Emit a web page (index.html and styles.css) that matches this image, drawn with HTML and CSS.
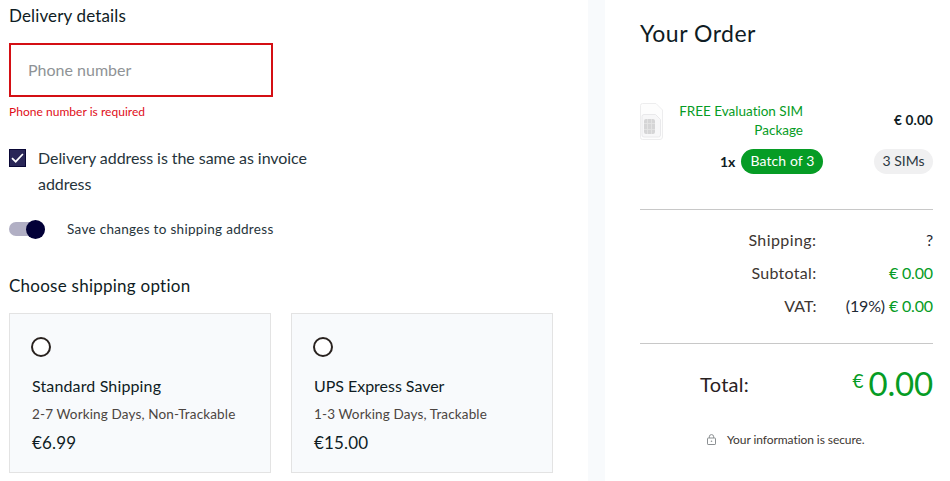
FILE: index.html
```html
<!DOCTYPE html>
<html lang="en">
<head>
<meta charset="utf-8">
<title>Checkout</title>
<link rel="stylesheet" href="styles.css">
</head>
<body>
<div class="page">
  <main class="delivery">
    <h2 class="heading">Delivery details</h2>
    <input class="phone" type="text" placeholder="Phone number" aria-label="Phone number">
    <p class="error">Phone number is required</p>
    <div class="same">
      <span class="checkbox"><svg viewBox="0 0 17 18" width="17" height="18"><path d="M3 9.2 6.7 12.7 13.9 5" fill="none" stroke="#fff" stroke-width="1.7"/></svg></span>
      <span class="same-label">Delivery address is the same as invoice address</span>
    </div>
    <div class="save">
      <span class="toggle"><span class="knob"></span></span>
      <span class="save-label">Save changes to shipping address</span>
    </div>
    <h2 class="heading choose">Choose shipping option</h2>
    <div class="options">
      <section class="option">
        <span class="radio"></span>
        <h3 class="option-title">Standard Shipping</h3>
        <p class="option-info">2-7 Working Days, Non-Trackable</p>
        <p class="option-price">€6.99</p>
      </section>
      <section class="option">
        <span class="radio"></span>
        <h3 class="option-title ups">UPS Express Saver</h3>
        <p class="option-info">1-3 Working Days, Trackable</p>
        <p class="option-price">€15.00</p>
      </section>
    </div>
  </main>
  <aside class="order">
    <h1 class="order-title">Your Order</h1>
    <div class="item">
      <svg class="sim" viewBox="0 0 23 37" width="23" height="37">
        <path d="M2.5.5H16L22.5 7v27a2.500 2.500 0 0 1-2.500 2.500h-17.500a2 2 0 0 1-2-2V2.500a2 2 0 0 1 2-2Z" fill="#fdfdfd" stroke="#ededee"/>
        <path d="M4 11.500h11.500l5 5V32a2 2 0 0 1-2 2H4a2 2 0 0 1-2-2V13.500a2 2 0 0 1 2-2Z" fill="#f7f7f8" stroke="#e9e9eb"/>
        <rect x="4" y="16" width="11" height="15" rx="2" fill="#d5d5d6"/>
        <path d="M4 20.500h11M4 26.500h11M7.500 16v15M11.500 16v15" stroke="#e4e4e5" stroke-width=".8"/>
      </svg>
      <span class="item-name">FREE Evaluation SIM Package</span>
      <span class="item-price">€ 0.00</span>
    </div>
    <div class="batch">
      <span class="qty">1x</span>
      <span class="pill green">Batch of 3</span>
      <span class="pill grey">3 SIMs</span>
    </div>
    <dl class="sums">
      <dt class="s-ship">Shipping:</dt><dd class="dark">?</dd>
      <dt class="s-sub">Subtotal:</dt><dd>€ 0.00</dd>
      <dt class="s-vat">VAT:</dt><dd><span class="rate">(19%)</span> € 0.00</dd>
    </dl>
    <div class="total">
      <span class="total-label">Total:</span>
      <span class="total-sum"><span class="euro">€</span><span class="amount">0.00</span></span>
    </div>
    <div class="secure">
      <svg viewBox="0 0 9 11" width="9" height="11"><rect x=".5" y="4" width="8" height="6.500" rx=".6" fill="none" stroke="#8b8f92"/><path d="M2.300 4V2.800a2.200 2.200 0 0 1 4.400 0V4" fill="none" stroke="#8b8f92"/><circle cx="4.500" cy="7.200" r=".8" fill="#8b8f92"/></svg>
      <span class="secure-text">Your information is secure.</span>
    </div>
  </aside>
</div>
</body>
</html>
```
FILE: styles.css
```css
* { box-sizing: border-box; margin: 0; padding: 0; }
body { font-family: Lato, "Liberation Sans", sans-serif; font-variant-ligatures: none; color: #0f1c24; background: #fff; overflow: hidden; }
.page { display: flex; width: 950px; height: 481px; }
.delivery { width: 588px; padding-left: 9px; }
.heading { font-size: 17px; font-weight: 400; line-height: 24px; letter-spacing: .14px; margin-top: 4px; white-space: nowrap; }
.phone { display: block; width: 264px; height: 54px; margin-top: 15px; padding: 0 17px 2px; border: 2px solid #d40f14; font: 400 16px/24px Lato, sans-serif; letter-spacing: 0; outline: none; }
.phone::placeholder { color: #8f9396; opacity: 1; }
.error { margin-top: 6px; font-size: 12px; line-height: 18px; letter-spacing: .03px; color: #e00d18; }
.same { display: flex; margin-top: 24px; }
.checkbox { width: 17px; height: 18px; margin-top: 4px; background: #292657; border: 1px solid #0a0836; display: flex; align-items: center; justify-content: center; }
.checkbox svg { flex: none; }
.same-label { width: 290px; margin-left: 12px; font-size: 16px; line-height: 26px; letter-spacing: -.06px; color: #26343b; }
.save { display: flex; align-items: center; height: 20px; margin-top: 22px; }
.toggle { display: flex; align-items: center; justify-content: flex-end; width: 36px; height: 14px; border-radius: 7px; background: #b1afc4; }
.knob { width: 19px; height: 19px; flex: none; border-radius: 50%; background: #020037; }
.save-label { margin-left: 22px; font-size: 13.5px; letter-spacing: .3px; color: #26343b; }
.choose { margin-top: 35px; letter-spacing: .25px; }
.options { display: flex; gap: 20px; margin-top: 15px; }
.option { width: 262px; height: 160px; padding: 23px 22px 0; background: #f8fafc; border: 1px solid #e3e3e3; }
.radio { display: block; width: 20px; height: 20px; margin-left: -1px; border: 2px solid #29221f; border-radius: 50%; background: #fff; }
.option-title { margin-top: 17px; font-size: 16px; font-weight: 400; line-height: 24px; letter-spacing: .14px; }
.ups { letter-spacing: -.03px; }
.option-info { margin-top: 5px; font-size: 13.5px; line-height: 22px; letter-spacing: .14px; color: #4b4541; }
.option-price { margin-top: 6px; font-size: 17px; line-height: 24px; letter-spacing: .15px; }
.order { width: 362px; padding: 0 17px 0 35px; border-left: 17px solid #f8fafc; }
.order-title { margin-top: 17px; font-size: 23px; font-weight: 400; line-height: 32px; letter-spacing: .5px; }
.item { display: flex; align-items: flex-start; margin-top: 52px; height: 42px; }
.sim { flex: none; margin-top: 2px; }
.item-name { width: 140px; margin-top: 1px; text-align: right; font-size: 13.5px; line-height: 19px; color: #069c25; }
.item-price { margin-left: auto; line-height: 39px; font-size: 13.5px; font-weight: 700; letter-spacing: .2px; }
.batch { display: flex; align-items: center; height: 26px; margin-top: 5px; }
.qty { margin-left: 80px; font-size: 14px; font-weight: 700; }
.pill { height: 25px; border-radius: 13px; padding: 0 9px; font-size: 14px; line-height: 24px; letter-spacing: .1px; white-space: nowrap; }
.green { margin-left: 6px; background: #069c25; color: #fff; }
.grey { margin-left: auto; padding: 0 8.5px; background: #f0f0f1; color: #2c3841; letter-spacing: 0; }
.sums { display: grid; grid-template-columns: 176.5px 1fr; row-gap: 9px; margin-top: 35px; padding: 18px 0 25px; border-top: 1px solid #c8c8c8; border-bottom: 1px solid #c8c8c8; font-size: 16px; line-height: 24px; text-align: right; white-space: nowrap; }
.sums dt { color: #3d3632; }
.s-ship { letter-spacing: .42px; }
.s-sub { letter-spacing: .3px; }
.sums dd { color: #069c25; letter-spacing: -.15px; }
.sums .dark, .rate { color: #1f2a35; }
.total { display: flex; justify-content: space-between; height: 40px; margin-top: 20px; padding-left: 60px; }
.total-label { font-size: 20px; line-height: 40px; letter-spacing: .3px; color: #29221f; }
.total-sum { display: flex; color: #069c25; }
.euro { font-size: 19px; line-height: 34px; margin-right: 5px; }
.amount { font-size: 33px; line-height: 38px; letter-spacing: -.2px; }
.secure { display: flex; align-items: center; height: 20px; margin: 26px 0 0 67px; }
.secure svg { margin-bottom: 2px; }
.secure-text { margin-left: 11px; font-size: 12px; line-height: 18px; letter-spacing: -.07px; color: #3d3632; }
```
